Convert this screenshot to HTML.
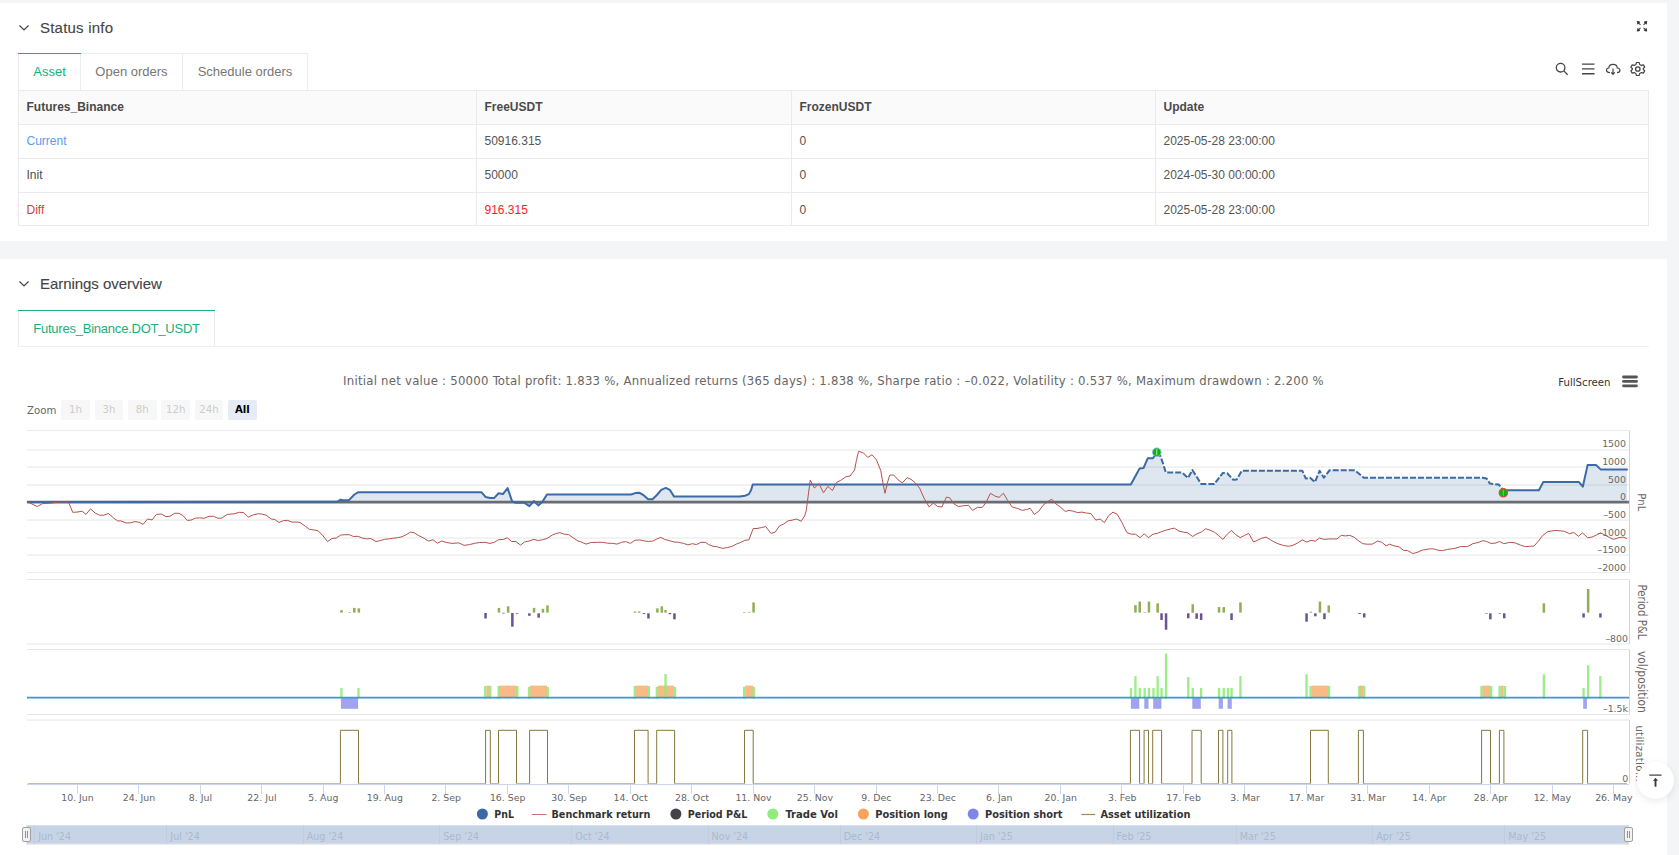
<!DOCTYPE html>
<html lang="en"><head><meta charset="utf-8"><title>Backtest result</title>
<style>
*{box-sizing:border-box}
html,body{margin:0;padding:0}
body{width:1679px;height:855px;overflow:hidden;background:#f4f5f7;font-family:"Liberation Sans",sans-serif;color:#333;position:relative;font-size:12px}
.card{position:absolute;left:0;width:1667px;background:#fff}
.abs{position:absolute}
.h{position:absolute;left:40px;font-size:15px;color:#444;white-space:nowrap;letter-spacing:0.2px;-webkit-text-stroke:0.12px #444}
.tabs{position:absolute;left:18px;height:37px;display:flex;border-top:1px solid #ececec}
.tab{height:37px;border-right:1px solid #ececec;border-bottom:1px solid #ececec;font-size:13px;color:#777;line-height:35px;text-align:center;white-space:nowrap}
.tab.on{color:#18b07b;border-left:1px solid #ececec;border-bottom:none;position:relative}
.tab.on:before{content:"";position:absolute;left:-1px;right:-1px;top:-1px;height:1px;background:#18b07b}
table{position:absolute;left:18px;top:87px;width:1631px;border-collapse:collapse;table-layout:fixed;font-size:12px}
td,th{border:1px solid #ebebeb;height:34px;padding:0 0 1.5px 7.5px;text-align:left;font-weight:normal;color:#555;white-space:nowrap}
th{background:#fafafa;font-weight:bold;color:#4a4a4a}
tr:last-child td{height:33px;padding:1px 0 0 7.5px}
.zb{position:absolute;top:400px;width:28.5px;height:19.5px;border-radius:2px;background:#f7f7f7;color:#cccccc;font:11.3px/20.5px 'DejaVu Sans Condensed','DejaVu Sans','Liberation Sans',sans-serif;font-stretch:condensed;text-align:center}
.zb.on{background:#e6ebf5;color:#000;font-weight:bold}
svg text{font-family:'DejaVu Sans Condensed','DejaVu Sans','Liberation Sans',sans-serif;font-stretch:condensed}
.ax{font-family:'DejaVu Sans','Liberation Sans',sans-serif;font-stretch:normal;font-size:9.4px;fill:#666}
.at{font-size:11.3px;fill:#666}
.lg{font-size:10.8px;font-weight:bold;fill:#333}
.nv{font-family:'DejaVu Sans','Liberation Sans',sans-serif;font-stretch:normal;font-size:9.6px;fill:#acb9cc}
</style></head>
<body>
<div class="card" style="top:3px;height:238px">
  <svg class="abs" style="left:18px;top:20px" width="12" height="10" viewBox="0 0 12 10"><path d="M1.5 2.5 L6 7 L10.5 2.5" fill="none" stroke="#444" stroke-width="1.2"/></svg>
  <div class="h" id="h1" style="top:16px;letter-spacing:0.22px">Status info</div>
  <svg class="abs" style="left:1635.3px;top:16.2px" width="14" height="14" viewBox="-7 -7.3 14 14"><g transform="scale(0.9)" stroke="#3a3a3a" stroke-width="1.15" fill="#3a3a3a" stroke-linejoin="round"><path d="M-1.7 -1.7 L-4.2 -4.2 M-5.2 -5.2 L-2.7 -4.7 L-4.7 -2.7 Z"/><path d="M1.7 -1.7 L4.2 -4.2 M5.2 -5.2 L2.7 -4.7 L4.7 -2.7 Z"/><path d="M-1.7 1.7 L-4.2 4.2 M-5.2 5.2 L-2.7 4.7 L-4.7 2.7 Z"/><path d="M1.7 1.7 L4.2 4.2 M5.2 5.2 L2.7 4.7 L4.7 2.7 Z"/></g></svg>
  <div class="tabs" style="top:50px">
    <div class="tab on" style="width:63px">Asset</div>
    <div class="tab" style="width:102px">Open orders</div>
    <div class="tab" style="width:125px">Schedule orders</div>
  </div>
  <svg class="abs" style="left:1553px;top:57px" width="96" height="20" viewBox="0 0 96 20" fill="none" stroke="#444" stroke-width="1.3">
    <circle cx="7.6" cy="7.7" r="4.3"/><path d="M10.8 10.9 L14.7 14.8"/>
    <path d="M29 7.6 H41.5 M29 12.4 H41.5 M29 17.2 H41.5" stroke-width="1.4" transform="translate(0 -3.5)"/>
    <path d="M57 12.6 C52.6 12.6 52.4 8.4 55.8 8 C56 3.4 63.8 3 64.3 8 C68 8.2 67.8 12.6 64 12.6 M60 8.6 V14 M58.2 12.4 L60 14.3 L61.8 12.4" stroke-width="1.2"/>
    <g transform="translate(84.8 9)"><circle r="2.2"/><path d="M-1.3 -6.5 H1.3 L1.9 -4.6 L3.7 -3.6 L5.6 -4.1 L6.9 -1.9 L5.5 -0.5 V0.5 L6.9 1.9 L5.6 4.1 L3.7 3.6 L1.9 4.6 L1.3 6.5 H-1.3 L-1.9 4.6 L-3.7 3.6 L-5.6 4.1 L-6.9 1.9 L-5.5 0.5 V-0.5 L-6.9 -1.9 L-5.6 -4.1 L-3.7 -3.6 L-1.9 -4.6 Z" stroke-width="1.2" stroke-linejoin="round"/></g>
  </svg>
  <table>
    <colgroup><col style="width:458px"><col style="width:315px"><col style="width:364px"><col></colgroup>
    <tr><th>Futures_Binance</th><th>FreeUSDT</th><th>FrozenUSDT</th><th>Update</th></tr>
    <tr><td style="color:#5a9cf0">Current</td><td>50916.315</td><td>0</td><td>2025-05-28 23:00:00</td></tr>
    <tr><td style="color:#4d4d4d">Init</td><td>50000</td><td>0</td><td>2024-05-30 00:00:00</td></tr>
    <tr><td style="color:#d2433c">Diff</td><td style="color:#f5222d">916.315</td><td>0</td><td>2025-05-28 23:00:00</td></tr>
  </table>
</div>
<div class="card" style="top:259px;height:596px"></div>
<svg class="abs" style="left:18px;top:279px" width="12" height="10" viewBox="0 0 12 10"><path d="M1.5 2.5 L6 7 L10.5 2.5" fill="none" stroke="#444" stroke-width="1.2"/></svg>
<div class="h" id="h2" style="top:275px;letter-spacing:-0.05px">Earnings overview</div>
<div class="abs" style="left:18px;top:346px;width:1631px;height:1px;background:#efefef"></div>
<div class="tabs" style="top:310px">
  <div class="tab on" id="t4" style="width:197px;height:36px;border-bottom:1px solid #efefef;letter-spacing:-0.22px;line-height:35px">Futures_Binance.DOT_USDT</div>
</div>
<div class="abs" style="left:0;top:374px;width:1667px;text-align:center;font:13px/14px 'DejaVu Sans Condensed','DejaVu Sans','Liberation Sans',sans-serif;font-stretch:condensed;letter-spacing:0.245px;color:#666;white-space:nowrap"><span id="sub" style="display:inline-block">Initial net value : 50000 Total profit: 1.833 %, Annualized returns (365 days) : 1.838 %, Sharpe ratio : –0.022, Volatility : 0.537 %, Maximum drawdown : 2.200 %</span></div>
<div class="abs" id="zm" style="left:27px;top:403px;font:11.3px/15px 'DejaVu Sans Condensed','DejaVu Sans','Liberation Sans',sans-serif;font-stretch:condensed;color:#666">Zoom</div>
<div class="zb" style="left:61.3px">1h</div><div class="zb" style="left:94.7px">3h</div><div class="zb" style="left:128.0px">8h</div><div class="zb" style="left:161.4px">12h</div><div class="zb" style="left:194.7px">24h</div><div class="zb on" style="left:228.1px">All</div>
<div class="abs" id="fs" style="left:1558.3px;top:376px;font:11.3px/14px 'DejaVu Sans Condensed','DejaVu Sans','Liberation Sans',sans-serif;font-stretch:condensed;color:#333">FullScreen</div>
<svg class="abs" style="left:1622px;top:375px" width="16" height="13" viewBox="0 0 16 13"><path d="M1.5 2 H14.5 M1.5 6.4 H14.5 M1.5 10.8 H14.5" stroke="#555" stroke-width="2.8" stroke-linecap="round"/></svg>
<svg class="abs" style="left:0;top:0" width="1679" height="855" viewBox="0 0 1679 855">
<path d="M27 430.5 H1629" stroke="#ececec" stroke-width="1"/>
<path d="M27 450 H1629" stroke="#e6e6e6" stroke-width="1"/>
<path d="M27 467 H1629" stroke="#e6e6e6" stroke-width="1"/>
<path d="M27 485 H1629" stroke="#e6e6e6" stroke-width="1"/>
<path d="M27 520 H1629" stroke="#e6e6e6" stroke-width="1"/>
<path d="M27 538 H1629" stroke="#e6e6e6" stroke-width="1"/>
<path d="M27 555 H1629" stroke="#e6e6e6" stroke-width="1"/>
<path d="M27 572.5 H1629" stroke="#ececec" stroke-width="1"/>
<path d="M27 579.5 H1629" stroke="#e6e6e6" stroke-width="1"/>
<path d="M27 644 H1629" stroke="#e6e6e6" stroke-width="1"/>
<path d="M27 649.5 H1629" stroke="#e6e6e6" stroke-width="1"/>
<path d="M27 714.5 H1629" stroke="#e6e6e6" stroke-width="1"/>
<path d="M27 720 H1629" stroke="#e6e6e6" stroke-width="1"/>
<path d="M1629.5 430.5 V572.5" stroke="#ccd6eb" stroke-width="1"/>
<path d="M1629.5 579.5 V644" stroke="#ccd6eb" stroke-width="1"/>
<path d="M1629.5 649.5 V714.5" stroke="#ccd6eb" stroke-width="1"/>
<path d="M1629.5 720 V783.5" stroke="#ccd6eb" stroke-width="1"/>
<path d="M27 784.5 H1629" stroke="#ccd6eb" stroke-width="1"/>
<path d="M27.8 501.9 L337.1 501.8 L340.6 499.7 L343.2 500.2 L349.2 499.9 L354.4 494.5 L358.4 492.2 L481.4 492.2 L485.7 497.1 L490.0 497.9 L494.3 497.9 L498.6 493.3 L502.9 494.1 L507.6 488.1 L512.1 501.4 L515.9 502.8 L524.5 502.8 L529.4 506.1 L534.0 501.1 L538.3 505.4 L542.7 501.4 L547.0 494.5 L631.0 494.5 L635.3 493.1 L639.6 492.8 L643.9 495.4 L648.2 499.3 L652.5 499.3 L656.9 495.0 L661.2 489.8 L665.8 487.9 L669.8 489.8 L674.1 496.6 L739.8 496.6 L744.9 495.7 L748.9 494.1 L751.0 490.2 L752.7 484.6 L1130.8 484.6 L1136.3 474.6 L1139.5 468.6 L1143.5 468.1 L1147.8 458.2 L1153.0 458.2 L1156.8 452.2 L1160.7 456.5 L1165.9 472.6 L1182.3 472.6 L1188.0 478.1 L1192.3 470.0 L1201.3 484.1 L1214.3 484.1 L1222.9 472.9 L1227.2 473.2 L1233.3 479.8 L1236.7 479.5 L1241.9 470.7 L1302.3 470.7 L1305.8 478.6 L1310.1 477.7 L1315.0 482.1 L1319.6 470.7 L1323.9 477.7 L1329.5 470.3 L1355.0 470.3 L1363.7 477.7 L1482.3 477.7 L1486.6 478.6 L1490.0 483.6 L1498.7 484.5 L1503.3 490.2 L1538.9 490.2 L1543.2 482.1 L1579.0 482.1 L1582.8 486.7 L1587.6 465.1 L1596.2 465.1 L1600.6 469.4 L1627.0 469.4 L1627.0 501.9 L27.8 501.9 Z" fill="#3d6aa3" fill-opacity="0.17" stroke="none"/>
<path d="M27 502.1 H1629" stroke="#696c72" stroke-width="2.9"/>
<path d="M27.8 501.9 L337.1 501.8 L340.6 499.7 L343.2 500.2 L349.2 499.9 L354.4 494.5 L358.4 492.2 L481.4 492.2 L485.7 497.1 L490.0 497.9 L494.3 497.9 L498.6 493.3 L502.9 494.1 L507.6 488.1 L512.1 501.4 L515.9 502.8 L524.5 502.8 L529.4 506.1 L534.0 501.1 L538.3 505.4 L542.7 501.4 L547.0 494.5 L631.0 494.5 L635.3 493.1 L639.6 492.8 L643.9 495.4 L648.2 499.3 L652.5 499.3 L656.9 495.0 L661.2 489.8 L665.8 487.9 L669.8 489.8 L674.1 496.6 L739.8 496.6 L744.9 495.7 L748.9 494.1 L751.0 490.2 L752.7 484.6 L1130.8 484.6 L1136.3 474.6 L1139.5 468.6 L1143.5 468.1 L1147.8 458.2 L1153.0 458.2 L1156.8 452.2" fill="none" stroke="#3b6aa5" stroke-width="2" stroke-linejoin="round" stroke-linecap="round"/>
<path d="M1156.8 452.2 L1160.7 456.5 L1165.9 472.6 L1182.3 472.6 L1188.0 478.1 L1192.3 470.0 L1201.3 484.1 L1214.3 484.1 L1222.9 472.9 L1227.2 473.2 L1233.3 479.8 L1236.7 479.5 L1241.9 470.7 L1302.3 470.7 L1305.8 478.6 L1310.1 477.7 L1315.0 482.1 L1319.6 470.7 L1323.9 477.7 L1329.5 470.3 L1355.0 470.3 L1363.7 477.7 L1482.3 477.7 L1486.6 478.6 L1490.0 483.6 L1498.7 484.5 L1503.3 490.2" fill="none" stroke="#3b6aa5" stroke-width="2" stroke-dasharray="6 2" stroke-linejoin="round"/>
<path d="M1503.3 490.2 L1538.9 490.2 L1543.2 482.1 L1579.0 482.1 L1582.8 486.7 L1587.6 465.1 L1596.2 465.1 L1600.6 469.4 L1627.0 469.4" fill="none" stroke="#3b6aa5" stroke-width="2" stroke-linejoin="round" stroke-linecap="round"/>
<path d="M27.8 501.9 L37.3 506.6 L42.5 503.6 L51.1 503.1 L61.5 501.8 L68.4 501.8 L72.7 512.3 L77.0 512.1 L82.2 511.2 L86.0 514.4 L90.5 508.8 L95.1 513.0 L99.5 515.2 L103.8 515.2 L108.4 513.5 L113.3 517.8 L117.6 520.9 L121.0 520.9 L126.2 523.0 L130.5 522.8 L134.8 521.6 L139.2 522.3 L143.1 524.4 L147.5 519.0 L152.1 519.9 L156.4 514.4 L161.3 514.0 L165.9 516.6 L169.9 516.3 L174.6 513.3 L178.9 513.3 L183.2 515.7 L187.2 520.4 L191.0 520.1 L195.3 518.2 L199.6 517.8 L203.9 518.3 L209.1 516.3 L213.4 516.3 L217.8 518.2 L221.7 518.2 L227.2 514.4 L234.2 513.8 L239.3 512.3 L243.7 512.6 L248.3 517.1 L253.2 514.9 L258.0 513.8 L261.8 514.0 L266.1 515.2 L271.3 519.0 L274.8 519.5 L279.1 522.5 L283.4 520.6 L287.7 520.4 L292.0 522.1 L297.2 522.1 L300.0 522.5 L305.2 526.1 L309.5 529.4 L313.8 529.9 L318.1 530.8 L322.4 535.1 L327.6 541.6 L331.9 538.5 L336.3 538.0 L340.6 535.1 L344.9 534.7 L349.2 534.7 L353.5 536.5 L357.9 536.3 L362.2 538.0 L366.5 538.9 L370.8 538.5 L376.0 541.5 L380.3 540.6 L384.6 539.4 L388.9 538.9 L393.3 538.2 L397.6 537.7 L401.9 536.8 L406.2 534.7 L410.5 532.1 L414.0 532.7 L418.3 535.4 L423.5 538.0 L428.7 541.1 L433.0 539.7 L437.3 543.2 L441.6 541.1 L446.8 542.5 L452.0 543.4 L458.9 542.9 L464.1 545.4 L469.3 544.6 L474.4 543.4 L479.6 542.5 L484.8 542.3 L490.0 543.4 L494.3 542.3 L498.6 539.7 L503.8 539.4 L507.2 537.7 L511.6 541.5 L515.9 541.5 L520.5 545.1 L524.5 542.0 L528.8 541.1 L534.0 539.4 L538.3 540.6 L542.7 539.7 L547.0 538.5 L552.2 535.1 L556.5 533.4 L559.9 532.7 L564.2 534.2 L568.6 534.6 L573.8 538.2 L578.1 541.1 L580.0 541.5 L586.0 544.1 L591.2 542.5 L597.3 542.3 L602.5 542.3 L607.6 543.2 L612.8 543.4 L617.1 544.1 L621.5 542.3 L625.8 541.6 L630.4 543.4 L634.9 540.3 L639.6 539.9 L643.9 540.8 L648.2 541.5 L652.5 541.1 L656.9 539.0 L660.8 537.3 L664.6 539.4 L669.8 540.8 L674.1 542.0 L678.5 542.3 L683.6 543.4 L687.9 544.9 L692.3 543.7 L696.6 544.6 L700.9 542.3 L705.2 542.3 L708.7 544.6 L713.0 546.3 L717.3 546.8 L722.5 548.4 L727.7 547.5 L732.0 546.3 L736.3 544.1 L740.6 542.5 L744.9 540.3 L748.9 539.9 L753.2 528.5 L757.0 528.5 L761.4 527.6 L765.7 526.5 L770.9 533.4 L775.2 532.1 L779.5 525.9 L783.8 523.9 L788.1 520.8 L792.4 520.1 L796.8 519.0 L801.1 521.3 L804.5 516.1 L806.2 510.9 L808.0 497.1 L810.2 480.2 L814.5 488.1 L818.9 483.6 L823.5 492.8 L827.8 486.4 L832.5 490.5 L836.5 482.4 L840.8 480.3 L846.0 476.7 L850.0 476.0 L854.6 470.0 L856.3 460.8 L858.6 451.3 L863.5 453.0 L867.8 457.4 L872.1 454.8 L876.4 459.9 L880.7 470.3 L883.3 485.0 L885.0 493.3 L887.3 483.3 L889.7 475.1 L893.7 475.0 L898.0 479.8 L902.3 482.9 L907.0 477.7 L911.0 479.3 L915.3 482.9 L919.6 488.1 L923.9 497.9 L929.1 506.9 L933.4 503.1 L937.7 506.6 L942.0 506.9 L946.4 497.1 L949.8 497.9 L954.1 504.0 L958.5 506.6 L963.6 505.7 L968.5 505.4 L972.6 510.4 L977.4 507.4 L982.3 507.4 L986.1 502.3 L990.4 493.3 L994.7 495.9 L999.0 497.4 L1003.4 493.3 L1007.7 500.5 L1012.0 506.9 L1017.2 508.3 L1022.4 510.4 L1026.7 509.5 L1030.1 508.3 L1034.4 514.4 L1038.8 511.2 L1043.1 505.2 L1047.4 501.9 L1051.7 499.2 L1056.0 504.0 L1060.3 506.9 L1065.2 511.4 L1069.0 510.4 L1073.3 511.2 L1077.6 512.6 L1081.9 512.1 L1086.2 513.0 L1090.9 513.5 L1095.8 520.1 L1100.1 519.0 L1104.4 522.6 L1108.7 515.6 L1113.0 512.1 L1117.3 514.4 L1121.7 522.1 L1126.8 532.5 L1131.2 534.2 L1135.5 534.2 L1140.0 537.7 L1144.3 533.7 L1148.3 537.7 L1153.0 534.2 L1157.3 533.4 L1161.6 531.6 L1165.9 530.2 L1170.2 529.0 L1174.5 528.2 L1178.9 531.1 L1183.2 532.1 L1187.5 532.8 L1192.7 536.5 L1197.0 533.7 L1201.3 532.1 L1205.6 528.7 L1210.0 530.2 L1214.3 532.1 L1218.6 535.6 L1222.9 539.4 L1227.2 534.2 L1231.5 530.4 L1235.8 534.7 L1240.2 537.7 L1244.5 535.4 L1248.8 533.4 L1253.5 542.0 L1257.4 540.3 L1261.8 538.2 L1266.1 537.1 L1270.4 539.7 L1274.7 542.3 L1279.0 544.1 L1283.3 545.4 L1288.5 546.3 L1292.8 545.4 L1297.2 543.2 L1302.3 539.9 L1306.7 542.0 L1311.0 540.3 L1315.3 541.1 L1319.6 538.0 L1323.9 539.4 L1328.3 539.0 L1332.6 538.9 L1336.9 539.0 L1341.2 535.4 L1345.5 535.9 L1349.8 535.4 L1354.2 537.3 L1358.5 540.8 L1362.8 543.7 L1367.1 544.2 L1372.3 544.1 L1377.5 541.1 L1381.8 542.3 L1386.1 545.8 L1389.6 544.2 L1393.9 545.8 L1399.1 546.8 L1403.4 550.3 L1407.7 550.6 L1412.9 553.6 L1418.1 552.0 L1422.4 550.1 L1429.6 548.9 L1433.9 548.9 L1438.2 550.3 L1442.5 550.6 L1447.7 549.4 L1454.6 548.4 L1460.7 546.6 L1467.6 546.6 L1472.8 543.7 L1478.0 542.5 L1483.1 540.6 L1486.6 541.5 L1490.9 543.4 L1495.2 543.2 L1499.5 541.5 L1503.8 543.7 L1509.9 542.3 L1515.1 542.9 L1520.3 545.1 L1525.4 546.6 L1529.8 546.3 L1534.1 546.0 L1538.4 541.1 L1542.7 535.4 L1547.9 531.6 L1555.7 530.4 L1564.3 531.3 L1569.5 533.7 L1573.8 532.5 L1578.5 536.3 L1582.4 532.8 L1587.6 537.7 L1591.9 537.1 L1596.2 535.1 L1600.6 532.8 L1604.9 535.1 L1609.2 537.3 L1613.5 539.4 L1618.7 537.7 L1623.0 537.1 L1627.0 538.5" fill="none" stroke="#b5524f" stroke-width="1" stroke-linejoin="round"/>
<circle cx="1156.75" cy="452.18" r="4.3" fill="#08b608" stroke="#8ab4f0" stroke-width="0.9"/>
<path d="M1156.75 449.18 V455.18" stroke="#e8f5e8" stroke-width="0.8"/>
<circle cx="1503.34" cy="492.77" r="4.2" fill="#08b608" stroke="#f0443c" stroke-width="1.2"/>
<path d="M1503.34 489.77 V495.77" stroke="#f0a090" stroke-width="0.8"/>
<rect x="340.2" y="610.1" width="2.5" height="2.5" fill="#8fae55"/>
<rect x="348.5" y="612.1" width="2.5" height="0.6" fill="#8fae55"/>
<rect x="353.0" y="607.9" width="2.5" height="4.7" fill="#8fae55"/>
<rect x="357.6" y="608.4" width="2.5" height="4.2" fill="#8fae55"/>
<rect x="484.3" y="613.0" width="2.5" height="5.5" fill="#6b5491"/>
<rect x="497.7" y="607.9" width="2.5" height="4.7" fill="#8fae55"/>
<rect x="502.2" y="612.8" width="2.5" height="0.7" fill="#6b5491"/>
<rect x="506.9" y="606.3" width="2.5" height="6.4" fill="#8fae55"/>
<rect x="511.1" y="613.0" width="2.5" height="13.7" fill="#6b5491"/>
<rect x="515.8" y="613.3" width="2.5" height="0.8" fill="#6b5491"/>
<rect x="528.1" y="613.3" width="2.5" height="2.5" fill="#6b5491"/>
<rect x="532.8" y="607.9" width="2.5" height="4.7" fill="#8fae55"/>
<rect x="537.4" y="613.3" width="2.5" height="4.4" fill="#6b5491"/>
<rect x="541.7" y="608.8" width="2.5" height="3.8" fill="#8fae55"/>
<rect x="546.2" y="605.4" width="2.5" height="7.2" fill="#8fae55"/>
<rect x="633.9" y="611.5" width="2.5" height="1.2" fill="#8fae55"/>
<rect x="638.0" y="611.5" width="2.5" height="1.2" fill="#8fae55"/>
<rect x="642.7" y="613.1" width="2.5" height="1.0" fill="#6b5491"/>
<rect x="647.2" y="613.3" width="2.5" height="5.2" fill="#6b5491"/>
<rect x="656.1" y="608.4" width="2.5" height="4.2" fill="#8fae55"/>
<rect x="660.6" y="606.3" width="2.5" height="6.4" fill="#8fae55"/>
<rect x="664.3" y="610.1" width="2.5" height="2.5" fill="#8fae55"/>
<rect x="668.7" y="613.0" width="2.5" height="1.2" fill="#6b5491"/>
<rect x="673.2" y="613.3" width="2.5" height="6.0" fill="#6b5491"/>
<rect x="743.1" y="612.1" width="2.5" height="0.6" fill="#8fae55"/>
<rect x="748.1" y="611.8" width="2.5" height="0.8" fill="#8fae55"/>
<rect x="752.3" y="602.4" width="2.5" height="10.2" fill="#8fae55"/>
<rect x="1134.2" y="605.1" width="2.5" height="7.5" fill="#8fae55"/>
<rect x="1138.5" y="601.6" width="2.5" height="11.0" fill="#8fae55"/>
<rect x="1143.4" y="612.1" width="2.5" height="0.6" fill="#8fae55"/>
<rect x="1147.7" y="601.6" width="2.5" height="11.0" fill="#8fae55"/>
<rect x="1156.4" y="603.3" width="2.5" height="9.4" fill="#8fae55"/>
<rect x="1160.3" y="613.3" width="2.5" height="6.7" fill="#6b5491"/>
<rect x="1164.8" y="613.3" width="2.5" height="16.4" fill="#6b5491"/>
<rect x="1187.0" y="613.3" width="2.5" height="5.0" fill="#6b5491"/>
<rect x="1191.5" y="604.3" width="2.5" height="8.4" fill="#8fae55"/>
<rect x="1195.4" y="613.3" width="2.5" height="5.5" fill="#6b5491"/>
<rect x="1199.9" y="613.3" width="2.5" height="6.7" fill="#6b5491"/>
<rect x="1217.8" y="607.1" width="2.5" height="5.5" fill="#8fae55"/>
<rect x="1222.5" y="607.1" width="2.5" height="5.5" fill="#8fae55"/>
<rect x="1230.3" y="613.3" width="2.5" height="6.7" fill="#6b5491"/>
<rect x="1239.2" y="602.4" width="2.5" height="10.2" fill="#8fae55"/>
<rect x="1305.3" y="613.3" width="2.5" height="8.4" fill="#6b5491"/>
<rect x="1309.5" y="611.6" width="2.5" height="1.0" fill="#8fae55"/>
<rect x="1314.1" y="613.3" width="2.5" height="3.0" fill="#6b5491"/>
<rect x="1318.7" y="601.6" width="2.5" height="11.0" fill="#8fae55"/>
<rect x="1323.2" y="613.3" width="2.5" height="5.9" fill="#6b5491"/>
<rect x="1327.5" y="605.4" width="2.5" height="7.2" fill="#8fae55"/>
<rect x="1358.3" y="613.0" width="2.5" height="1.0" fill="#6b5491"/>
<rect x="1363.0" y="613.3" width="2.5" height="4.2" fill="#6b5491"/>
<rect x="1485.2" y="613.0" width="2.5" height="0.6" fill="#6b5491"/>
<rect x="1489.1" y="613.3" width="2.5" height="6.0" fill="#6b5491"/>
<rect x="1498.6" y="613.0" width="2.5" height="0.6" fill="#6b5491"/>
<rect x="1503.0" y="613.3" width="2.5" height="5.0" fill="#6b5491"/>
<rect x="1542.6" y="603.3" width="2.5" height="9.4" fill="#8fae55"/>
<rect x="1582.3" y="613.3" width="2.5" height="4.2" fill="#6b5491"/>
<rect x="1586.9" y="589.0" width="2.5" height="23.6" fill="#8fae55"/>
<rect x="1599.2" y="613.3" width="2.5" height="4.2" fill="#6b5491"/>
<rect x="486.4" y="685.6" width="3.3" height="12.1" fill="#f7a35c" fill-opacity="0.75"/>
<rect x="499.0" y="685.6" width="17.6" height="12.1" fill="#f7a35c" fill-opacity="0.75"/>
<rect x="529.9" y="685.6" width="17.1" height="12.1" fill="#f7a35c" fill-opacity="0.75"/>
<rect x="635.5" y="685.6" width="12.5" height="12.1" fill="#f7a35c" fill-opacity="0.75"/>
<rect x="657.7" y="685.6" width="16.2" height="12.1" fill="#f7a35c" fill-opacity="0.75"/>
<rect x="745.2" y="685.6" width="7.9" height="12.1" fill="#f7a35c" fill-opacity="0.75"/>
<rect x="1311.5" y="685.6" width="16.7" height="12.1" fill="#f7a35c" fill-opacity="0.75"/>
<rect x="1359.5" y="685.6" width="3.9" height="12.1" fill="#f7a35c" fill-opacity="0.75"/>
<rect x="1482.3" y="685.6" width="8.4" height="12.1" fill="#f7a35c" fill-opacity="0.75"/>
<rect x="1500.4" y="685.6" width="3.3" height="12.1" fill="#f7a35c" fill-opacity="0.75"/>
<rect x="340.9" y="697.7" width="17.2" height="11.1" fill="#8085e9" fill-opacity="0.75"/>
<rect x="1130.9" y="697.7" width="8.4" height="11.1" fill="#8085e9" fill-opacity="0.75"/>
<rect x="1144.3" y="697.7" width="4.2" height="11.1" fill="#8085e9" fill-opacity="0.75"/>
<rect x="1153.2" y="697.7" width="8.2" height="11.1" fill="#8085e9" fill-opacity="0.75"/>
<rect x="1192.3" y="697.7" width="8.5" height="11.1" fill="#8085e9" fill-opacity="0.75"/>
<rect x="1218.7" y="697.7" width="4.2" height="11.1" fill="#8085e9" fill-opacity="0.75"/>
<rect x="1227.6" y="697.7" width="4.2" height="11.1" fill="#8085e9" fill-opacity="0.75"/>
<rect x="1583.2" y="697.7" width="3.7" height="11.1" fill="#8085e9" fill-opacity="0.75"/>
<rect x="340.3" y="687.9" width="2.3" height="10.8" fill="#90ed7d" fill-opacity="0.92"/>
<rect x="357.3" y="687.9" width="2.3" height="10.8" fill="#90ed7d" fill-opacity="0.92"/>
<rect x="484.1" y="686.0" width="2.3" height="12.7" fill="#90ed7d" fill-opacity="0.92"/>
<rect x="489.1" y="686.0" width="2.3" height="12.7" fill="#90ed7d" fill-opacity="0.92"/>
<rect x="497.5" y="686.0" width="2.3" height="12.7" fill="#90ed7d" fill-opacity="0.92"/>
<rect x="516.2" y="686.0" width="2.3" height="12.7" fill="#90ed7d" fill-opacity="0.92"/>
<rect x="527.9" y="686.9" width="2.3" height="11.8" fill="#90ed7d" fill-opacity="0.92"/>
<rect x="546.6" y="686.9" width="2.3" height="11.8" fill="#90ed7d" fill-opacity="0.92"/>
<rect x="633.6" y="686.0" width="2.3" height="12.7" fill="#90ed7d" fill-opacity="0.92"/>
<rect x="647.7" y="686.0" width="2.3" height="12.7" fill="#90ed7d" fill-opacity="0.92"/>
<rect x="655.7" y="686.9" width="2.3" height="11.8" fill="#90ed7d" fill-opacity="0.92"/>
<rect x="664.4" y="674.0" width="2.3" height="24.7" fill="#90ed7d" fill-opacity="0.92"/>
<rect x="673.8" y="686.9" width="2.3" height="11.8" fill="#90ed7d" fill-opacity="0.92"/>
<rect x="743.0" y="686.9" width="2.3" height="11.8" fill="#90ed7d" fill-opacity="0.92"/>
<rect x="752.7" y="686.9" width="2.3" height="11.8" fill="#90ed7d" fill-opacity="0.92"/>
<rect x="1129.8" y="687.9" width="2.3" height="10.8" fill="#90ed7d" fill-opacity="0.92"/>
<rect x="1134.3" y="676.2" width="2.3" height="22.5" fill="#90ed7d" fill-opacity="0.92"/>
<rect x="1138.6" y="687.9" width="2.3" height="10.8" fill="#90ed7d" fill-opacity="0.92"/>
<rect x="1143.5" y="687.9" width="2.3" height="10.8" fill="#90ed7d" fill-opacity="0.92"/>
<rect x="1147.8" y="687.9" width="2.3" height="10.8" fill="#90ed7d" fill-opacity="0.92"/>
<rect x="1152.3" y="687.9" width="2.3" height="10.8" fill="#90ed7d" fill-opacity="0.92"/>
<rect x="1156.5" y="676.2" width="2.3" height="22.5" fill="#90ed7d" fill-opacity="0.92"/>
<rect x="1160.4" y="687.9" width="2.3" height="10.8" fill="#90ed7d" fill-opacity="0.92"/>
<rect x="1164.9" y="653.6" width="2.3" height="45.1" fill="#90ed7d" fill-opacity="0.92"/>
<rect x="1187.1" y="677.0" width="2.3" height="21.7" fill="#90ed7d" fill-opacity="0.92"/>
<rect x="1191.6" y="687.9" width="2.3" height="10.8" fill="#90ed7d" fill-opacity="0.92"/>
<rect x="1200.0" y="687.9" width="2.3" height="10.8" fill="#90ed7d" fill-opacity="0.92"/>
<rect x="1217.9" y="687.9" width="2.3" height="10.8" fill="#90ed7d" fill-opacity="0.92"/>
<rect x="1222.6" y="687.9" width="2.3" height="10.8" fill="#90ed7d" fill-opacity="0.92"/>
<rect x="1226.8" y="687.9" width="2.3" height="10.8" fill="#90ed7d" fill-opacity="0.92"/>
<rect x="1230.4" y="687.9" width="2.3" height="10.8" fill="#90ed7d" fill-opacity="0.92"/>
<rect x="1239.3" y="676.2" width="2.3" height="22.5" fill="#90ed7d" fill-opacity="0.92"/>
<rect x="1305.4" y="674.3" width="2.3" height="24.4" fill="#90ed7d" fill-opacity="0.92"/>
<rect x="1309.5" y="686.0" width="2.3" height="12.7" fill="#90ed7d" fill-opacity="0.92"/>
<rect x="1327.9" y="686.0" width="2.3" height="12.7" fill="#90ed7d" fill-opacity="0.92"/>
<rect x="1358.1" y="686.0" width="2.3" height="12.7" fill="#90ed7d" fill-opacity="0.92"/>
<rect x="1363.1" y="686.0" width="2.3" height="12.7" fill="#90ed7d" fill-opacity="0.92"/>
<rect x="1480.3" y="686.0" width="2.3" height="12.7" fill="#90ed7d" fill-opacity="0.92"/>
<rect x="1490.0" y="686.0" width="2.3" height="12.7" fill="#90ed7d" fill-opacity="0.92"/>
<rect x="1498.4" y="686.0" width="2.3" height="12.7" fill="#90ed7d" fill-opacity="0.92"/>
<rect x="1503.8" y="686.0" width="2.3" height="12.7" fill="#90ed7d" fill-opacity="0.92"/>
<rect x="1542.7" y="674.3" width="2.3" height="24.4" fill="#90ed7d" fill-opacity="0.92"/>
<rect x="1582.4" y="687.9" width="2.3" height="10.8" fill="#90ed7d" fill-opacity="0.92"/>
<rect x="1587.0" y="665.3" width="2.3" height="33.4" fill="#90ed7d" fill-opacity="0.92"/>
<rect x="1599.2" y="676.2" width="2.3" height="22.5" fill="#90ed7d" fill-opacity="0.92"/>
<path d="M27 697.7 H1629" stroke="#3d96d8" stroke-width="1.8"/>
<path d="M28.0 783.5 H340.4 M358.5 783.5 H485.6 M490.3 783.5 H498.5 M516.5 783.5 H529.6 M547.5 783.5 H634.5 M648.1 783.5 H656.7 M674.6 783.5 H744.5 M753.2 783.5 H1130.4 M1139.6 783.5 H1144.1 M1148.5 783.5 H1152.7 M1161.6 783.5 H1192.0 M1201.2 783.5 H1218.5 M1222.9 783.5 H1227.7 M1231.9 783.5 H1310.5 M1328.3 783.5 H1358.4 M1363.4 783.5 H1481.6 M1490.5 783.5 H1499.4 M1503.9 783.5 H1582.7 M1587.6 783.5 H1627" fill="none" stroke="#8a7c44" stroke-opacity="0.5" stroke-width="1"/>
<path d="M340.4 783.5 V730.3 H358.5 V783.5 M485.6 783.5 V730.3 H490.3 V783.5 M498.5 783.5 V730.3 H516.5 V783.5 M529.6 783.5 V730.3 H547.5 V783.5 M634.5 783.5 V730.3 H648.1 V783.5 M656.7 783.5 V730.3 H674.6 V783.5 M744.5 783.5 V730.3 H753.2 V783.5 M1130.4 783.5 V730.3 H1139.6 V783.5 M1144.1 783.5 V730.3 H1148.5 V783.5 M1152.7 783.5 V730.3 H1161.6 V783.5 M1192.0 783.5 V730.3 H1201.2 V783.5 M1218.5 783.5 V730.3 H1222.9 V783.5 M1227.7 783.5 V730.3 H1231.9 V783.5 M1310.5 783.5 V730.3 H1328.3 V783.5 M1358.4 783.5 V730.3 H1363.4 V783.5 M1481.6 783.5 V730.3 H1490.5 V783.5 M1499.4 783.5 V730.3 H1503.9 V783.5 M1582.7 783.5 V730.3 H1587.6 V783.5" fill="none" stroke="#85773e" stroke-width="1" stroke-linejoin="round"/>
<path d="M77.5 785 V794" stroke="#ccd6eb" stroke-width="1"/>
<text x="77.5" y="801" text-anchor="middle" class="ax">10. Jun</text>
<path d="M138.5 785 V794" stroke="#ccd6eb" stroke-width="1"/>
<text x="139.0" y="801" text-anchor="middle" class="ax">24. Jun</text>
<path d="M200.5 785 V794" stroke="#ccd6eb" stroke-width="1"/>
<text x="200.4" y="801" text-anchor="middle" class="ax">8. Jul</text>
<path d="M261.5 785 V794" stroke="#ccd6eb" stroke-width="1"/>
<text x="261.9" y="801" text-anchor="middle" class="ax">22. Jul</text>
<path d="M323.5 785 V794" stroke="#ccd6eb" stroke-width="1"/>
<text x="323.3" y="801" text-anchor="middle" class="ax">5. Aug</text>
<path d="M384.5 785 V794" stroke="#ccd6eb" stroke-width="1"/>
<text x="384.8" y="801" text-anchor="middle" class="ax">19. Aug</text>
<path d="M445.5 785 V794" stroke="#ccd6eb" stroke-width="1"/>
<text x="446.2" y="801" text-anchor="middle" class="ax">2. Sep</text>
<path d="M507.5 785 V794" stroke="#ccd6eb" stroke-width="1"/>
<text x="507.7" y="801" text-anchor="middle" class="ax">16. Sep</text>
<path d="M568.5 785 V794" stroke="#ccd6eb" stroke-width="1"/>
<text x="569.1" y="801" text-anchor="middle" class="ax">30. Sep</text>
<path d="M630.5 785 V794" stroke="#ccd6eb" stroke-width="1"/>
<text x="630.6" y="801" text-anchor="middle" class="ax">14. Oct</text>
<path d="M691.5 785 V794" stroke="#ccd6eb" stroke-width="1"/>
<text x="692.0" y="801" text-anchor="middle" class="ax">28. Oct</text>
<path d="M753.5 785 V794" stroke="#ccd6eb" stroke-width="1"/>
<text x="753.5" y="801" text-anchor="middle" class="ax">11. Nov</text>
<path d="M814.5 785 V794" stroke="#ccd6eb" stroke-width="1"/>
<text x="814.9" y="801" text-anchor="middle" class="ax">25. Nov</text>
<path d="M876.5 785 V794" stroke="#ccd6eb" stroke-width="1"/>
<text x="876.4" y="801" text-anchor="middle" class="ax">9. Dec</text>
<path d="M937.5 785 V794" stroke="#ccd6eb" stroke-width="1"/>
<text x="937.8" y="801" text-anchor="middle" class="ax">23. Dec</text>
<path d="M998.5 785 V794" stroke="#ccd6eb" stroke-width="1"/>
<text x="999.3" y="801" text-anchor="middle" class="ax">6. Jan</text>
<path d="M1060.5 785 V794" stroke="#ccd6eb" stroke-width="1"/>
<text x="1060.7" y="801" text-anchor="middle" class="ax">20. Jan</text>
<path d="M1121.5 785 V794" stroke="#ccd6eb" stroke-width="1"/>
<text x="1122.2" y="801" text-anchor="middle" class="ax">3. Feb</text>
<path d="M1183.5 785 V794" stroke="#ccd6eb" stroke-width="1"/>
<text x="1183.6" y="801" text-anchor="middle" class="ax">17. Feb</text>
<path d="M1244.5 785 V794" stroke="#ccd6eb" stroke-width="1"/>
<text x="1245.1" y="801" text-anchor="middle" class="ax">3. Mar</text>
<path d="M1306.5 785 V794" stroke="#ccd6eb" stroke-width="1"/>
<text x="1306.5" y="801" text-anchor="middle" class="ax">17. Mar</text>
<path d="M1367.5 785 V794" stroke="#ccd6eb" stroke-width="1"/>
<text x="1368.0" y="801" text-anchor="middle" class="ax">31. Mar</text>
<path d="M1429.5 785 V794" stroke="#ccd6eb" stroke-width="1"/>
<text x="1429.4" y="801" text-anchor="middle" class="ax">14. Apr</text>
<path d="M1490.5 785 V794" stroke="#ccd6eb" stroke-width="1"/>
<text x="1490.9" y="801" text-anchor="middle" class="ax">28. Apr</text>
<path d="M1552.5 785 V794" stroke="#ccd6eb" stroke-width="1"/>
<text x="1552.3" y="801" text-anchor="middle" class="ax">12. May</text>
<path d="M1613.5 785 V794" stroke="#ccd6eb" stroke-width="1"/>
<text x="1613.8" y="801" text-anchor="middle" class="ax">26. May</text>
<text x="1626" y="447" text-anchor="end" class="ax">1500</text>
<text x="1626" y="465" text-anchor="end" class="ax">1000</text>
<text x="1626" y="482.5" text-anchor="end" class="ax">500</text>
<text x="1626" y="500" text-anchor="end" class="ax">0</text>
<text x="1626" y="517.5" text-anchor="end" class="ax">–500</text>
<text x="1626" y="535.5" text-anchor="end" class="ax">–1000</text>
<text x="1626" y="552.5" text-anchor="end" class="ax">–1500</text>
<text x="1626" y="570.5" text-anchor="end" class="ax">–2000</text>
<text x="1628" y="641.5" text-anchor="end" class="ax">–800</text>
<text x="1628" y="711.8" text-anchor="end" class="ax">–1.5k</text>
<text x="1628.3" y="781.5" text-anchor="end" class="ax">0</text>
<text transform="translate(1637.5 502.3) rotate(90)" text-anchor="middle" class="at" style="font-size:11.3px">PnL</text>
<text transform="translate(1637.5 612) rotate(90)" text-anchor="middle" class="at" style="font-size:11.4px">Period P&amp;L</text>
<text transform="translate(1637.5 681.8) rotate(90)" text-anchor="middle" class="at" style="font-size:11.9px">vol/position</text>
<text transform="translate(1635.8 725.4) rotate(90)" class="at" id="utl" style="letter-spacing:0.28px">utilizatio…</text>
<circle cx="482.4" cy="814" r="5.5" fill="#3b6aa5"/>
<text x="494.3" y="818" class="lg" textLength="19.6" lengthAdjust="spacingAndGlyphs">PnL</text>
<path d="M531.7 814.5 H546.5" stroke="#d0706c" stroke-width="1"/>
<text x="551.5" y="818" class="lg" textLength="99" lengthAdjust="spacingAndGlyphs">Benchmark return</text>
<circle cx="675.9" cy="814" r="5.5" fill="#434348"/>
<text x="687.8" y="818" class="lg" textLength="59.5" lengthAdjust="spacingAndGlyphs">Period P&amp;L</text>
<circle cx="772.8" cy="814" r="5.5" fill="#90ed7d"/>
<text x="785.4" y="818" class="lg" textLength="52.5" lengthAdjust="spacingAndGlyphs">Trade Vol</text>
<circle cx="863.4" cy="814" r="5.5" fill="#f7a35c"/>
<text x="875.3" y="818" class="lg" textLength="72.6" lengthAdjust="spacingAndGlyphs">Position long</text>
<circle cx="973.2" cy="814" r="5.5" fill="#8085e9"/>
<text x="985.1" y="818" class="lg" textLength="77.4" lengthAdjust="spacingAndGlyphs">Position short</text>
<path d="M1081.3 814.5 H1095.2" stroke="#9c8b4a" stroke-width="1.2"/>
<text x="1100.4" y="818" class="lg" textLength="90" lengthAdjust="spacingAndGlyphs">Asset utilization</text>
<rect x="26.4" y="825.3" width="1602.4" height="18.4" fill="#c7d4e6"/>
<path d="M26.4 844 H1629" stroke="#d4d7dc" stroke-width="1"/>
<path d="M34.5 825.5 V844" stroke="#c0cde1" stroke-width="1"/>
<text x="38.2" y="839.8" class="nv">Jun '24</text>
<path d="M166.5 825.5 V844" stroke="#c0cde1" stroke-width="1"/>
<text x="170.3" y="839.8" class="nv">Jul '24</text>
<path d="M303.5 825.5 V844" stroke="#c0cde1" stroke-width="1"/>
<text x="306.7" y="839.8" class="nv">Aug '24</text>
<path d="M439.5 825.5 V844" stroke="#c0cde1" stroke-width="1"/>
<text x="443.2" y="839.8" class="nv">Sep '24</text>
<path d="M571.5 825.5 V844" stroke="#c0cde1" stroke-width="1"/>
<text x="575.2" y="839.8" class="nv">Oct '24</text>
<path d="M708.5 825.5 V844" stroke="#c0cde1" stroke-width="1"/>
<text x="711.6" y="839.8" class="nv">Nov '24</text>
<path d="M840.5 825.5 V844" stroke="#c0cde1" stroke-width="1"/>
<text x="843.7" y="839.8" class="nv">Dec '24</text>
<path d="M976.5 825.5 V844" stroke="#c0cde1" stroke-width="1"/>
<text x="980.1" y="839.8" class="nv">Jan '25</text>
<path d="M1113.5 825.5 V844" stroke="#c0cde1" stroke-width="1"/>
<text x="1116.6" y="839.8" class="nv">Feb '25</text>
<path d="M1236.5 825.5 V844" stroke="#c0cde1" stroke-width="1"/>
<text x="1239.8" y="839.8" class="nv">Mar '25</text>
<path d="M1372.5 825.5 V844" stroke="#c0cde1" stroke-width="1"/>
<text x="1376.3" y="839.8" class="nv">Apr '25</text>
<path d="M1504.5 825.5 V844" stroke="#c0cde1" stroke-width="1"/>
<text x="1508.3" y="839.8" class="nv">May '25</text>
<rect x="22.5" y="827.5" width="8" height="14" rx="1.5" fill="#f2f2f2" stroke="#a0a0a0" stroke-width="1"/>
<path d="M25.5 831 V838 M27.5 831 V838" stroke="#777" stroke-width="0.8"/>
<rect x="1624.5" y="827.5" width="8" height="14" rx="1.5" fill="#f2f2f2" stroke="#a0a0a0" stroke-width="1"/>
<path d="M1627.5 831 V838 M1629.5 831 V838" stroke="#777" stroke-width="0.8"/>
</svg>
<div class="abs" style="left:1636.5px;top:762px;width:37px;height:37px;border-radius:50%;background:#fff;box-shadow:0 2px 8px rgba(0,0,0,0.09)">
  <svg class="abs" style="left:11px;top:11px" width="15" height="15" viewBox="0 0 15 15"><path d="M1.3 2.1 H13.6" stroke="#3a3a3a" stroke-width="1.2"/><path d="M7.5 13.7 V7" stroke="#3a3a3a" stroke-width="1.9"/><path d="M5 7.8 L7.5 4.8 L10 7.8 Z" fill="#3a3a3a"/></svg>
</div>
</body></html>
